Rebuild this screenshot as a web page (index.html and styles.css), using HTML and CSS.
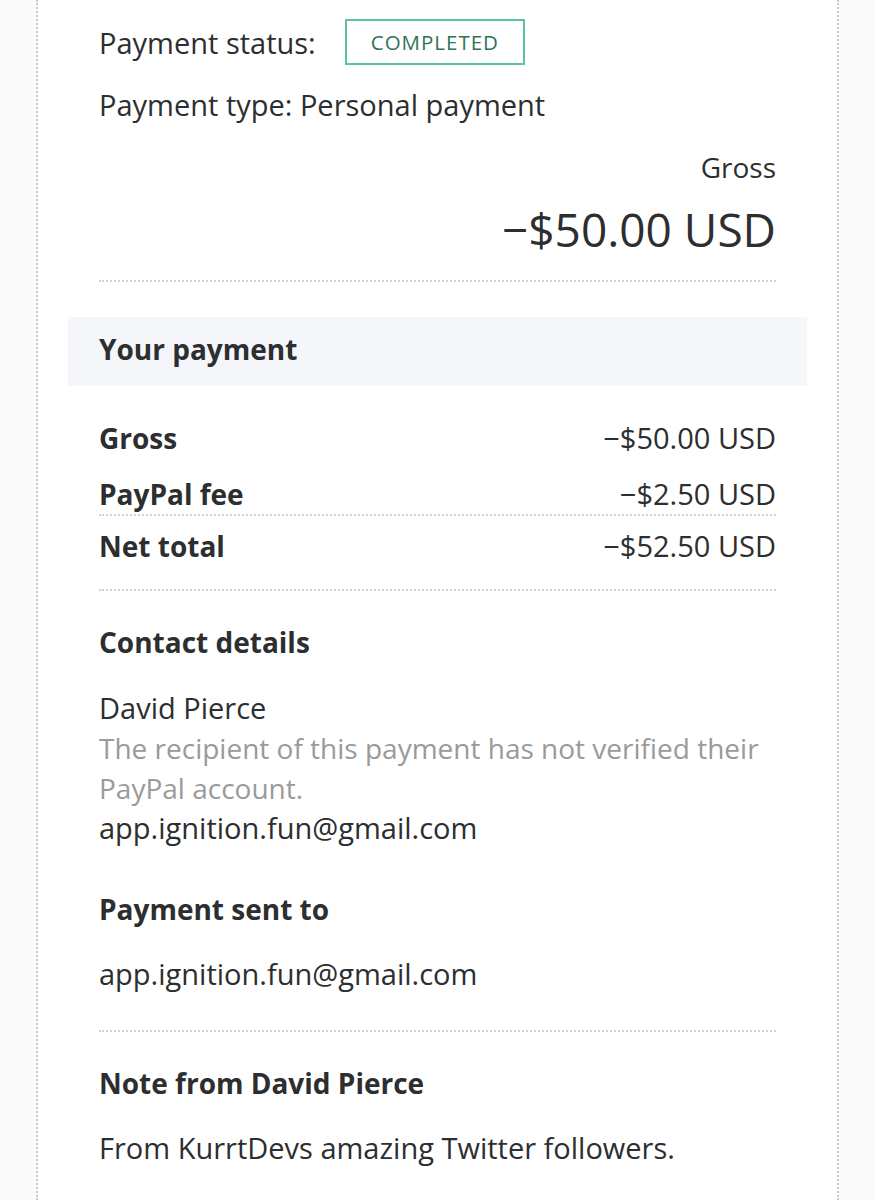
FILE: index.html
```html
<!DOCTYPE html>
<html lang="en">
<head>
    <meta charset="UTF-8">
    <meta name="viewport" content="width=device-width, initial-scale=1.0">
    <title>Transaction details</title>
    <link rel="stylesheet" href="styles.css">
</head>
<body>
    <div class="card">
        <!-- Status -->
        <div class="block top">
            <div class="status-row">
                <span>Payment status:</span>
                <span class="badge">COMPLETED</span>
            </div>
            <p class="type">Payment type: Personal payment</p>
            <div class="gross">
                <div class="gross-label">Gross</div>
                <div class="gross-amount">&minus;$50.00 USD</div>
            </div>
        </div>

        <!-- Your payment -->
        <div class="band">Your payment</div>
        <div class="block">
            <div class="rows">
                <div class="row"><span class="label">Gross</span><span>&minus;$50.00 USD</span></div>
                <div class="row row-fee"><span class="label">PayPal fee</span><span>&minus;$2.50 USD</span></div>
                <div class="row row-net"><span class="label">Net total</span><span>&minus;$52.50 USD</span></div>
            </div>
        </div>

        <!-- Contact -->
        <div class="block">
            <h3>Contact details</h3>
            <div class="contact">
                <div>David Pierce</div>
                <div class="muted">The recipient of this payment has not verified their PayPal account.</div>
                <div>app.ignition.fun@gmail.com</div>
            </div>
            <h3>Payment sent to</h3>
            <p class="plain sent">app.ignition.fun@gmail.com</p>
        </div>

        <!-- Note -->
        <div class="block">
            <h3>Note from David Pierce</h3>
            <p class="plain">From KurrtDevs amazing Twitter followers.</p>
        </div>
    </div>
</body>
</html>
```

FILE: styles.css
```css
body {
    margin: 0;
    padding: 0;
    background-color: #fafafa;
    font-family: "Open Sans", Arial, sans-serif;
    color: #2c2e2f;
    font-size: 29px;
}
.card {
    margin: 0 36px;
    min-height: 1200px;
    padding: 0 30px;
    background: #fff;
    border-left: 2px dotted #c8c8c8;
    border-right: 2px dotted #c8c8c8;
}
.block {
    padding: 0 31px;
}
.top {
    padding-top: 19px;
}
.status-row {
    display: flex;
    align-items: center;
    gap: 29px;
    height: 46px;
}
.badge {
    border: 2px solid #5cc597;
    color: #2f7357;
    font-size: 20.5px;
    letter-spacing: 1px;
    padding: 0 24px;
    height: 42px;
    display: flex;
    align-items: center;
}
.type {
    margin: 20px 0 0;
    line-height: 40px;
}
.gross {
    text-align: right;
    padding-bottom: 21px;
    border-bottom: 2px dotted #d0d0d0;
}
.gross-label {
    margin-top: 22px;
    line-height: 40px;
    font-size: 28px;
}
.gross-amount {
    font-size: 46px;
    line-height: 60px;
    margin-top: 12px;
}
.band {
    margin-top: 35px;
    background: #f5f6fa;
    height: 69px;
    box-sizing: border-box;
    display: flex;
    align-items: center;
    padding: 0 31px 6px;
    font-weight: 700;
    font-size: 28px;
}
.rows {
    padding-top: 32px;
    border-bottom: 2px dotted #d0d0d0;
    padding-bottom: 23px;
}
.row {
    display: flex;
    justify-content: space-between;
    line-height: 40px;
}
.label {
    font-weight: 700;
    font-size: 28px;
}
.row-fee {
    margin-top: 16px;
    border-bottom: 2px dotted #d0d0d0;
}
.row-net {
    margin-top: 10px;
}
h3 {
    font-size: 28px;
    font-weight: 700;
    margin: 0;
    line-height: 40px;
}
.block h3:first-child {
    margin-top: 31px;
}
.contact {
    margin-top: 26px;
    line-height: 40px;
}
.muted {
    color: #9a9a9a;
    font-size: 28px;
}
.contact + h3 {
    margin-top: 41px;
}
.plain {
    margin: 25px 0 0;
    line-height: 40px;
}
.sent {
    padding-bottom: 36px;
    border-bottom: 2px dotted #d0d0d0;
}
```
